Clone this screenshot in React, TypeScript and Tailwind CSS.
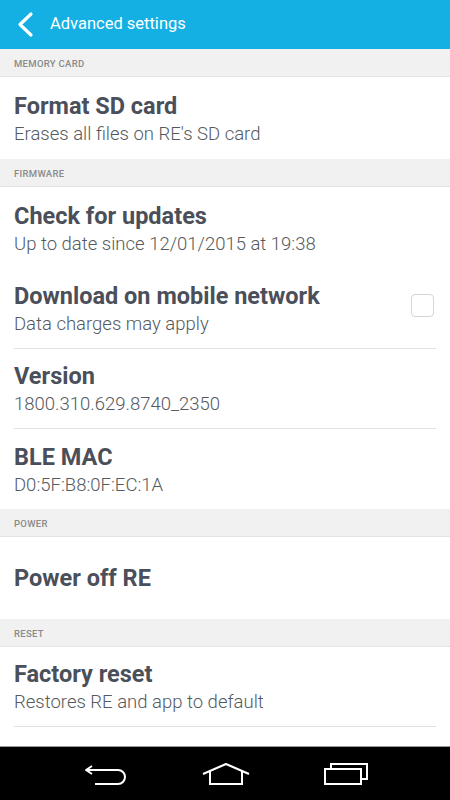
import React from "react";

const Section = ({ label }: { label: string }) => (
  <div className="h-[28px] bg-[#f0f1f0] border-b border-[#e4e4e4] flex items-center px-[14px] pt-[3px]">
    <span className="text-[9.5px] font-medium tracking-[0.3px] text-[#8a8a8a] uppercase">{label}</span>
  </div>
);

const Item = ({
  title,
  sub,
  divider,
  checkbox,
  h = 82,
}: {
  title: string;
  sub?: string;
  divider?: boolean;
  checkbox?: boolean;
  h?: number;
}) => (
  <div className="px-[14px] bg-white">
    <div
      className={`flex items-center ${divider ? "border-b border-[#e2e2e2]" : ""}`}
      style={{ height: h }}
    >
      <div className="flex-1 flex flex-col">
        <div className="text-[23.5px] leading-[28px] font-bold text-[#4a4f5a]">{title}</div>
        {sub && <div className="text-[18.5px] leading-[25px] font-light text-[#555a60] mt-[2px] mb-[-2px]">{sub}</div>}
      </div>
      {checkbox && (
        <div className="w-[23px] h-[23px] rounded-[4px] border border-[#d6d6d6] mr-[2px] mt-[-6px]" />
      )}
    </div>
  </div>
);

export default function App() {
  return (
    <div className="w-[450px] h-[800px] flex flex-col bg-white overflow-hidden" style={{ fontFamily: "Roboto, 'Noto Sans', sans-serif" }}>
      <div className="h-[49px] bg-[#14b0e3] flex items-center">
        <svg width="50" height="49" viewBox="0 0 50 49">
          <polyline points="31,14 20,24.5 31,35" fill="none" stroke="white" strokeWidth="3.2" strokeLinecap="round" strokeLinejoin="round" />
        </svg>
        <span className="text-white text-[16.5px] font-normal leading-none">Advanced settings</span>
      </div>
      <Section label="Memory card" />
      <Item title="Format SD card" sub="Erases all files on RE's SD card" h={82} />
      <Section label="Firmware" />
      <Item title="Check for updates" sub="Up to date since 12/01/2015 at 19:38" h={82} />
      <Item title="Download on mobile network" sub="Data charges may apply" divider checkbox h={80} />
      <Item title="Version" sub="1800.310.629.8740_2350" divider h={80} />
      <Item title="BLE MAC" sub="D0:5F:B8:0F:EC:1A" h={80} />
      <Section label="Power" />
      <Item title="Power off RE" h={82} />
      <Section label="Reset" />
      <Item title="Factory reset" sub="Restores RE and app to default" divider h={80} />
      <div className="flex-1 bg-white" />
      <div className="h-[1px] bg-[#9a9a9a]" />
      <div className="h-[53px] bg-black flex items-center pl-[83px] gap-[72px]">
        <svg width="46" height="24" viewBox="0 0 46 24">
          <path d="M9 4 L3 8 L9 12" fill="none" stroke="white" strokeWidth="2" strokeLinejoin="round" />
          <path d="M3 8 H35 a7 7 0 0 1 0 14 H12" fill="none" stroke="white" strokeWidth="2" />
        </svg>
        <svg width="50" height="24" viewBox="0 0 50 24">
          <path d="M2 12 L25 2 L48 12" fill="none" stroke="white" strokeWidth="2" strokeLinejoin="round" />
          <path d="M9 9 V22 H41 V9" fill="none" stroke="white" strokeWidth="2" />
        </svg>
        <svg width="46" height="24" viewBox="0 0 46 24">
          <rect x="2" y="7" width="36" height="15" fill="none" stroke="white" strokeWidth="2" />
          <path d="M8 7 V2 H44 V17 H38" fill="none" stroke="white" strokeWidth="2" />
        </svg>
      </div>
    </div>
  );
}
